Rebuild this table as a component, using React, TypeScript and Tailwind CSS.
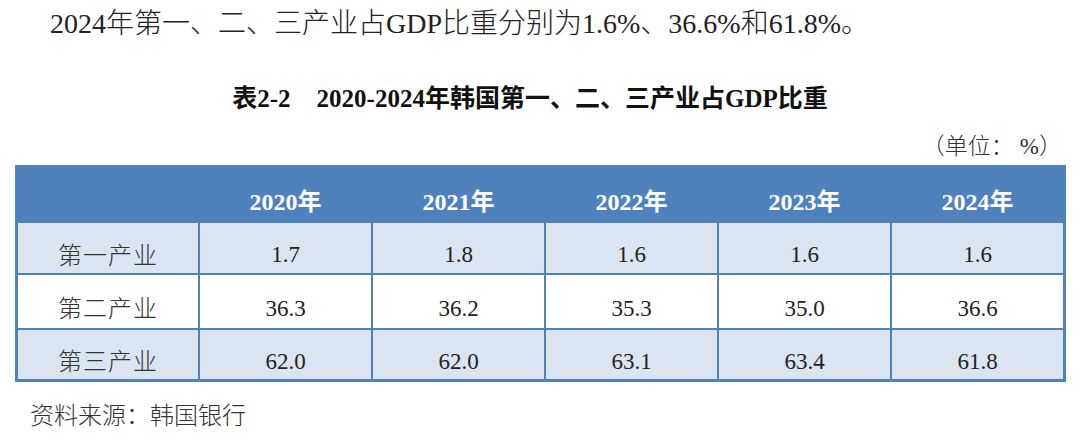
const serif = 'font-["Liberation_Serif","Noto_Sans_CJK_SC",serif]';

const years = ['2020年', '2021年', '2022年', '2023年', '2024年'];

const rows = [
    { label: '第一产业', values: ['1.7', '1.8', '1.6', '1.6', '1.6'], shaded: true, h: 'h-[50px]' },
    { label: '第二产业', values: ['36.3', '36.2', '35.3', '35.0', '36.6'], shaded: false, h: 'h-[53px]' },
    { label: '第三产业', values: ['62.0', '62.0', '63.1', '63.4', '61.8'], shaded: true, h: 'h-[49px]' },
];

export default function App() {
    return (
        <div className={`w-[1080px] h-[440px] bg-white overflow-hidden text-[#222] ${serif}`}>
            {/* intro sentence */}
            <p className="pl-[50px] pt-[2px] text-[28px] leading-[44px] font-light">
                2024年第一、二、三产业占GDP比重分别为1.6%、36.6%和61.8%。
            </p>

            {/* table caption */}
            <h2 className="mt-[37px] pr-[20px] text-center text-[25px] leading-[32px] font-bold text-[#111]">
                表2-2<span className="inline-block w-[26px]" />2020-2024年韩国第一、二、三产业占GDP比重
            </h2>

            <div className="mt-[17px] pr-[18px] text-right text-[23px] leading-[30px] text-[#333] font-light">
                （单位：<span className="pl-[6px]">%</span>）
            </div>

            {/* data table */}
            <div className="mt-[3px] ml-[15px] w-[1051px] bg-[#4f81bd] px-[3px] pb-[3px]">
                <div className="grid grid-cols-[180px_repeat(5,1fr)] gap-[2px]">
                    <div className="h-[56px]" />
                    {years.map((y) => (
                        <div
                            key={y}
                            className="h-[56px] flex items-center justify-center pt-[18px] text-white font-bold text-[24px]"
                        >
                            {y}
                        </div>
                    ))}

                    {rows.map((row) => (
                        <div key={row.label} className="contents">
                            <div
                                className={`${row.h} ${row.shaded ? 'bg-[#dbe5f1]' : 'bg-white'} flex items-center justify-center pt-[15px] text-[24px] text-[#333] tracking-[1px] font-light`}
                            >
                                {row.label}
                            </div>
                            {row.values.map((v, i) => (
                                <div
                                    key={i}
                                    className={`${row.h} ${row.shaded ? 'bg-[#dbe5f1]' : 'bg-white'} flex items-center justify-center pt-[15px] text-[23px] text-[#222]`}
                                >
                                    {v}
                                </div>
                            ))}
                        </div>
                    ))}
                </div>
            </div>

            <p className="mt-[18px] pl-[30px] text-[24px] leading-[32px] text-[#333] font-light">
                资料来源：韩国银行
            </p>
        </div>
    );
}
